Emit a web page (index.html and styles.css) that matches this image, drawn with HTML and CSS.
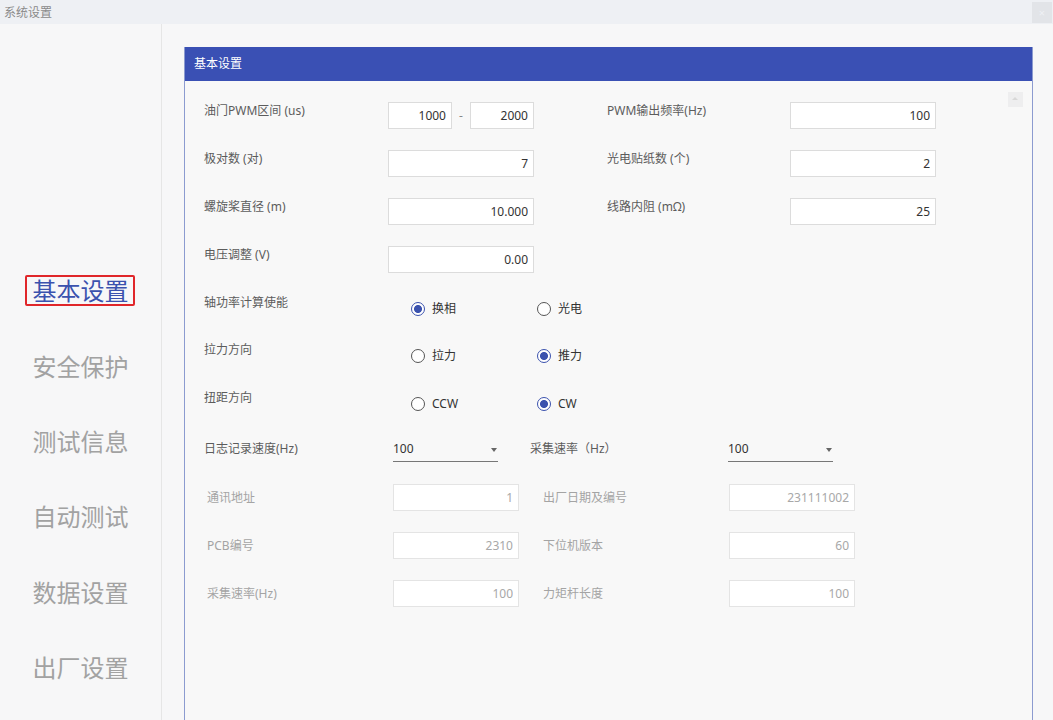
FILE: index.html
```html
<!DOCTYPE html>
<html lang="zh-CN">
<head>
    <meta charset="UTF-8">
    <meta name="viewport" content="width=device-width, initial-scale=1.0">
    <title>系统设置</title>
    <link rel="stylesheet" href="styles.css">
</head>
<body>

    <div class="titlebar">
        <span class="title">系统设置</span>
        <span class="close-btn">&times;</span>
    </div>

    <div class="window">
        <nav class="sidebar">
            <div class="nav-item active"><span>基本设置</span></div>
            <div class="nav-item"><span>安全保护</span></div>
            <div class="nav-item"><span>测试信息</span></div>
            <div class="nav-item"><span>自动测试</span></div>
            <div class="nav-item"><span>数据设置</span></div>
            <div class="nav-item"><span>出厂设置</span></div>
        </nav>

        <main class="content">
            <section class="panel">
                <div class="panel-head">基本设置</div>
                <div class="panel-body">
                    <span class="scroll-up"></span>

                    <div class="row">
                        <label class="lbl">油门PWM区间 (us)</label>
                        <div class="field range">
                            <input class="num short" value="1000">
                            <span class="dash">-</span>
                            <input class="num short" value="2000">
                        </div>
                        <label class="lbl right">PWM输出频率(Hz)</label>
                        <div class="field"><input class="num" value="100"></div>
                    </div>

                    <div class="row">
                        <label class="lbl">极对数 (对)</label>
                        <div class="field"><input class="num" value="7"></div>
                        <label class="lbl right">光电贴纸数 (个)</label>
                        <div class="field"><input class="num" value="2"></div>
                    </div>

                    <div class="row">
                        <label class="lbl">螺旋桨直径 (m)</label>
                        <div class="field"><input class="num" value="10.000"></div>
                        <label class="lbl right">线路内阻 (mΩ)</label>
                        <div class="field"><input class="num" value="25"></div>
                    </div>

                    <div class="row">
                        <label class="lbl">电压调整 (V)</label>
                        <div class="field"><input class="num" value="0.00"></div>
                    </div>

                    <div class="row radio-row">
                        <label class="lbl wide">轴功率计算使能</label>
                        <span class="radio checked">换相</span>
                        <span class="radio">光电</span>
                    </div>

                    <div class="row radio-row tall">
                        <label class="lbl wide">拉力方向</label>
                        <span class="radio">拉力</span>
                        <span class="radio checked">推力</span>
                    </div>

                    <div class="row radio-row">
                        <label class="lbl wide">扭距方向</label>
                        <span class="radio">CCW</span>
                        <span class="radio checked">CW</span>
                    </div>

                    <div class="row combo-row">
                        <label class="lbl mid">日志记录速度(Hz)</label>
                        <div class="combo">100</div>
                        <label class="lbl combo-right">采集速率（Hz）</label>
                        <div class="combo">100</div>
                    </div>

                    <div class="row info-row">
                        <label class="lbl mid">通讯地址</label>
                        <input class="num ro" value="1" readonly>
                        <label class="lbl info-right">出厂日期及编号</label>
                        <input class="num ro" value="231111002" readonly>
                    </div>

                    <div class="row info-row">
                        <label class="lbl mid">PCB编号</label>
                        <input class="num ro" value="2310" readonly>
                        <label class="lbl info-right">下位机版本</label>
                        <input class="num ro" value="60" readonly>
                    </div>

                    <div class="row info-row">
                        <label class="lbl mid">采集速率(Hz)</label>
                        <input class="num ro" value="100" readonly>
                        <label class="lbl info-right">力矩杆长度</label>
                        <input class="num ro" value="100" readonly>
                    </div>
                </div>
            </section>
        </main>
    </div>

</body>
</html>
```

FILE: styles.css
```css
body {
    margin: 0;
    padding: 0;
    height: 720px;
    overflow: hidden;
    font-family: "Noto Sans", "Noto Sans CJK SC", sans-serif;
    background-color: #f7f7f8;
    color: #444;
}

.titlebar {
    height: 24px;
    background-color: #eef0f4;
    display: flex;
    align-items: center;
    justify-content: space-between;
    padding-left: 4px;
}

.title {
    font-size: 12px;
    color: #8a8a8a;
}

.close-btn {
    width: 20px;
    height: 21px;
    margin-right: 1px;
    background-color: #e2e4e8;
    color: #eef0f4;
    font-size: 11px;
    line-height: 21px;
    text-align: center;
}

.window {
    display: flex;
    height: 696px;
}

.sidebar {
    width: 162px;
    flex-shrink: 0;
    border-right: 1px solid #e6e6e6;
    padding-top: 229px;
    box-sizing: border-box;
    display: flex;
    flex-direction: column;
}

.nav-item {
    height: 75.4px;
    display: flex;
    align-items: center;
    justify-content: center;
    font-size: 24px;
    color: #a2a2a2;
}

.nav-item span {
    padding: 0 5px;
    line-height: 27px;
    border: 2px solid transparent;
}

.nav-item.active span {
    color: #3b52ae;
    border-color: #e0262a;
    border-radius: 2px;
    padding: 0 4px 0 6px;
    margin-left: -2px;
}

.content {
    flex: 1;
    padding: 23px 20px 0 22px;
}

.panel {
    width: 849px;
    height: 700px;
    box-sizing: border-box;
    border: 1px solid #8c9bd0;
    border-top: none;
    background-color: #f8f8f8;
}

.panel-head {
    height: 34px;
    background-color: #3a50b4;
    color: white;
    font-size: 12px;
    line-height: 34px;
    padding-left: 9px;
}

.panel-body {
    position: relative;
    padding: 21px 0 0 19px;
}

/* kleiner Scroll-Pfeil oben rechts */
.scroll-up {
    position: absolute;
    top: 11px;
    right: 9px;
    width: 15px;
    height: 15px;
    background-color: #eeeeef;
}

.scroll-up::after {
    content: "";
    position: absolute;
    left: 4px;
    top: 5px;
    border-left: 3px solid transparent;
    border-right: 3px solid transparent;
    border-bottom: 3px solid #d8d8d8;
}

.row {
    display: flex;
    align-items: flex-start;
    height: 48px;
}

.lbl {
    font-size: 12px;
    line-height: 18px;
    color: #5c5c5c;
    width: 184px;
    flex-shrink: 0;
}

.lbl.right {
    margin-left: 73px;
    width: 183px;
}

.field {
    width: 146px;
    display: flex;
    align-items: center;
}

input.num {
    font-family: inherit;
    font-size: 12px;
    color: #333;
    width: 146px;
    height: 27px;
    box-sizing: border-box;
    border: 1px solid #dcdcdc;
    background-color: white;
    text-align: right;
    padding: 0 5px 0 0;
    margin: 0;
    outline: none;
}

input.num.short {
    width: 64px;
}

.dash {
    width: 18px;
    text-align: center;
    font-size: 12px;
    color: #888;
}

.radio-row {
    height: 47px;
}

.radio-row.tall {
    height: 48px;
}

.lbl.wide {
    width: 207px;
}

.radio {
    width: 126px;
    margin-top: 6px;
    display: flex;
    align-items: center;
    gap: 7px;
    font-size: 12px;
    line-height: 18px;
    color: #333;
}

.radio::before {
    content: "";
    width: 14px;
    height: 14px;
    box-sizing: border-box;
    border: 1px solid #555;
    border-radius: 50%;
    background-color: white;
}

.radio.checked::before {
    border-color: #3b52ae;
    background: radial-gradient(circle, #3b52ae 0, #3b52ae 3.6px, white 4.4px);
}

.lbl.mid {
    width: 189px;
}

.combo-row .lbl {
    margin-top: 4px;
}

.combo {
    width: 105px;
    box-sizing: border-box;
    padding-top: 4px;
    padding-bottom: 3px;
    line-height: 18px;
    font-size: 12px;
    color: #333;
    border-bottom: 1px solid #777;
    position: relative;
}

.combo::after {
    content: "";
    position: absolute;
    right: 1px;
    top: 12px;
    border-left: 3.5px solid transparent;
    border-right: 3.5px solid transparent;
    border-top: 4px solid #666;
}

.lbl.combo-right {
    margin-left: 32px;
    width: 198px;
}

.info-row .lbl {
    line-height: 27px;
    color: #a4a4a4;
}

.info-row .lbl.mid {
    padding-left: 3px;
    width: 186px;
}

input.num.ro {
    width: 126px;
    color: #a8a8a8;
    border-color: #e4e4e4;
}

.lbl.info-right {
    margin-left: 24px;
    width: 186px;
}
```
